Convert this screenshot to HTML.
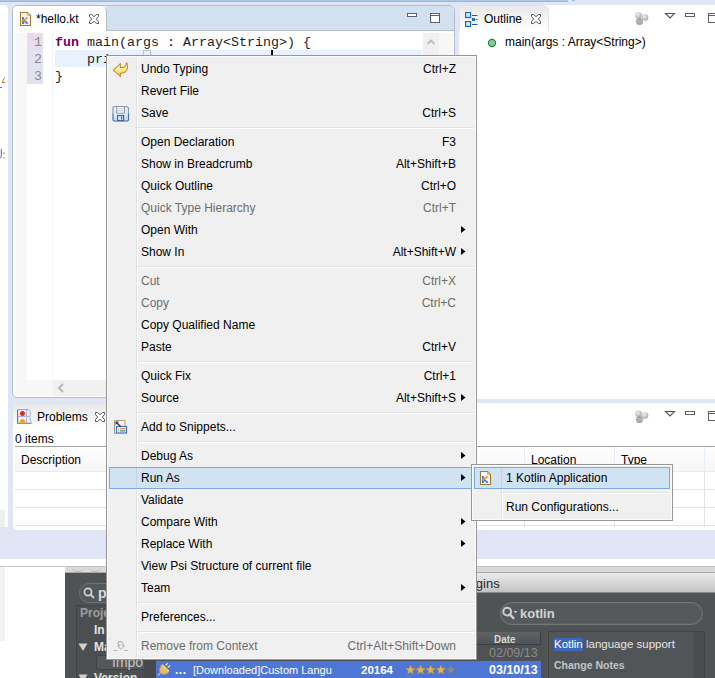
<!DOCTYPE html>
<html><head><meta charset="utf-8">
<style>
*{margin:0;padding:0;box-sizing:border-box}
html,body{width:715px;height:678px;overflow:hidden}
body{position:relative;background:#e1e6f6;font-family:"Liberation Sans",sans-serif;font-size:12px;color:#000}
.a{position:absolute}
.mono{font-family:"Liberation Mono",monospace;font-size:13.33px;line-height:17px;white-space:pre}
.t{white-space:pre;line-height:15px}
.mi{white-space:pre;line-height:22px;font-size:12px}
</style></head><body>

<!-- top strip -->
<div class="a" style="left:0;top:0;width:568px;height:1px;background:#abc8e6"></div>
<div class="a" style="left:0;top:1px;width:568px;height:1px;background:#a9b3c9"></div>

<!-- left trim white -->
<div class="a" style="left:0;top:5px;width:8px;height:522px;background:#fff;border-top-right-radius:5px"></div>
<div class="a" style="left:0;top:510px;width:5px;height:17px;background:#f0f0f0"></div>
<svg class="a" style="left:0;top:76px" width="8" height="14" viewBox="0 0 8 14"><path d="M4.5 1.5L2 6.5h3" fill="none" stroke="#c08030" stroke-width="1"/><path d="M0 11.5h2" stroke="#a07030" stroke-width="1"/></svg>
<svg class="a" style="left:0;top:147px" width="8" height="14" viewBox="0 0 8 14"><path d="M1.3 2v7.5Q1.2 11.2 -1 11.2" fill="none" stroke="#6a6090" stroke-width="1"/><path d="M4 5.4v1.3M4 10.2v1.1" stroke="#5a6070" stroke-width="1.1"/></svg>
<div class="a" style="left:572px;top:0;width:3px;height:1px;background:#9db8d8"></div>

<!-- ============ EDITOR ============ -->
<div class="a" style="left:12px;top:5px;width:443px;height:393px;background:#fff;border:1px solid #b6bccc;border-radius:6px 6px 5px 5px"></div>
<!-- tab bar -->
<div class="a" style="left:106px;top:6px;width:348px;height:25px;background:#d2e1f0;border-bottom:1px solid #b6bccc;border-top-right-radius:5px"></div>
<!-- selected tab -->
<div class="a" style="left:13px;top:6px;width:94px;height:25px;background:#fff;border-right:1px solid #b6bccc;border-radius:5px 6px 0 0"></div>
<div class="a" style="left:106px;top:30px;width:1px;height:1px;background:#b6bccc"></div>
<!-- kotlin file icon -->
<svg class="a" style="left:16px;top:9px" width="20" height="20" viewBox="0 0 20 20">
 <path d="M4.5 3.5H11.5L14.5 6.5V16.5H4.5Z" fill="#f7f8fc" stroke="#a27b2c" stroke-width="1.1"/>
 <path d="M11.5 3.8V6.5H14.2" fill="#efd48a" stroke="#c6a458" stroke-width=".7"/>
 <rect x="6" y="8" width="1.8" height="7" fill="#2f6fd6"/>
 <path d="M7.6 11.2L11.8 14.8" stroke="#4088e4" stroke-width="1.9"/>
 <path d="M6.2 12L11.8 8.4" stroke="#f29a1a" stroke-width="1.8"/>
</svg>
<div class="a t" style="left:36px;top:12px">*hello.kt</div>
<!-- close X -->
<svg class="a" style="left:89px;top:14px" width="10" height="10" viewBox="0 0 10 10"><path d="M0.5 0.5H2.5L5 2.7 7.5 0.5H9.5V2.5L7.3 5 9.5 7.5V9.5H7.5L5 7.3 2.5 9.5H0.5V7.5L2.7 5 0.5 2.5Z" fill="#fff" stroke="#5a5a5a" stroke-width="1"/></svg>
<!-- editor min/max icons -->
<div class="a" style="left:407px;top:13px;width:10px;height:4px;border:1px solid #606060;background:#fff"></div>
<div class="a" style="left:430px;top:13px;width:10px;height:10px;border:1px solid #606060;background:#fff"></div><div class="a" style="left:431px;top:15px;width:8px;height:1px;background:#606060"></div>

<!-- rulers -->
<div class="a" style="left:15px;top:33px;width:12px;height:347px;background:#f7f7f7"></div>
<div class="a" style="left:27px;top:33px;width:16px;height:17px;background:#e9dcec"></div>
<div class="a" style="left:27px;top:50px;width:16px;height:34px;background:#e3e2f0"></div>
<div class="a" style="left:52px;top:33px;width:1px;height:347px;background:#f3f3f3"></div>
<div class="a" style="left:15px;top:380px;width:38px;height:16px;background:#f7f7f7"></div>
<div class="a" style="left:53px;top:380px;width:370px;height:16px;background:#f0f0f0"></div>
<svg class="a" style="left:57px;top:383px" width="8" height="10" viewBox="0 0 8 10"><path d="M6 1L2 5l4 4" fill="none" stroke="#b8b8b8" stroke-width="2"/></svg>
<div class="a mono" style="left:27px;top:34px;width:15px;text-align:right;color:#8a8a8a">1
2
3</div>
<!-- current line -->
<div class="a" style="left:55px;top:50px;width:367px;height:17px;background:#e8f2fe"></div>
<!-- vertical scrollbar -->
<div class="a" style="left:423px;top:33px;width:16px;height:347px;background:#f0f0f0"></div>
<div class="a" style="left:439px;top:33px;width:14px;height:347px;background:#f7f7f7"></div>
<svg class="a" style="left:426px;top:38px" width="10" height="8" viewBox="0 0 10 8"><path d="M1.5 6l3.5-3.5 3.5 3.5" fill="none" stroke="#bdbdbd" stroke-width="1.8"/></svg>
<div class="a mono" style="left:55px;top:34px;color:#1e1e1e"><b style="color:#7f0055">fun</b> main(args : Array&lt;String&gt;) {
    pri
}</div>
<div class="a" style="left:143px;top:50px;width:8px;height:6px;border:1px solid #c0c0c0;border-bottom:none"></div>
<div class="a" style="left:271px;top:50px;width:2px;height:6px;background:#000"></div>

<!-- ============ OUTLINE ============ -->
<div class="a" style="left:459px;top:5px;width:260px;height:394px;background:#fff;border-top-left-radius:6px"></div>
<div class="a" style="left:459px;top:5px;width:90px;height:26px;background:linear-gradient(#e9e9ea,#fff);border:1px solid #e3e3e3;border-bottom:none;border-radius:6px 6px 0 0"></div>
<!-- outline icon -->
<svg class="a" style="left:465px;top:12px" width="14" height="15" viewBox="0 0 14 15">
 <defs><linearGradient id="og" x1="0" y1="0" x2="0" y2="1"><stop offset="0" stop-color="#ffffff"/><stop offset="1" stop-color="#9ed6f6"/></linearGradient></defs>
 <rect x="0.6" y="0.6" width="5" height="5" fill="url(#og)" stroke="#1f6ab6" stroke-width="1.2"/>
 <rect x="0.6" y="9.6" width="5" height="5" fill="url(#og)" stroke="#1f6ab6" stroke-width="1.2"/>
 <rect x="7.5" y="6.5" width="2" height="2" fill="#fff" stroke="#1f6ab6" stroke-width="1.1"/>
 <path d="M7 3.5h5.5M10.8 7.5h1.7M7 12.5h5.5" stroke="#2a58a8" stroke-width="1.1"/>
</svg>
<div class="a t" style="left:484px;top:12px">Outline</div>
<svg class="a" style="left:531px;top:14px" width="10" height="10" viewBox="0 0 10 10"><path d="M0.5 0.5H2.5L5 2.7 7.5 0.5H9.5V2.5L7.3 5 9.5 7.5V9.5H7.5L5 7.3 2.5 9.5H0.5V7.5L2.7 5 0.5 2.5Z" fill="#fff" stroke="#5a5a5a" stroke-width="1"/></svg>
<!-- balls -->
<svg class="a" style="left:634px;top:11px" width="16" height="16" viewBox="0 0 16 16">
 <defs><radialGradient id="bg11" cx=".4" cy=".35" r=".7"><stop offset="0" stop-color="#f0f0f0"/><stop offset="1" stop-color="#a8a8a8"/></radialGradient></defs>
 <circle cx="4.5" cy="4.5" r="3.3" fill="url(#bg11)"/><circle cx="11" cy="6.5" r="3.3" fill="url(#bg11)"/><circle cx="5.5" cy="10.5" r="3.6" fill="#a0a0a0"/>
 <path d="M2.2 9.6h6.6M2 11.6h7" stroke="#c8c8c8" stroke-width=".8"/>
</svg>
<svg class="a" style="left:664px;top:12px" width="12" height="8" viewBox="0 0 12 8"><path d="M1.5 1.5h9L6 6z" fill="#fff" stroke="#555" stroke-width="1.1"/></svg>
<div class="a" style="left:685px;top:13px;width:10px;height:4px;border:1px solid #606060"></div>
<div class="a" style="left:708px;top:13px;width:10px;height:10px;border:1px solid #606060"></div><div class="a" style="left:709px;top:15px;width:8px;height:1px;background:#606060"></div>
<svg class="a" style="left:487px;top:38px" width="10" height="10" viewBox="0 0 10 10"><circle cx="5" cy="5" r="3.6" fill="#92c88e" stroke="#138a48" stroke-width="1.1"/></svg>
<div class="a t" style="left:505px;top:35px">main(args : Array&lt;String&gt;)</div>

<!-- ============ PROBLEMS ============ -->
<div class="a" style="left:12px;top:403px;width:710px;height:127px;background:#fff;border-left:1px solid #e6e6e6;border-radius:6px 0 0 6px"></div>
<div class="a" style="left:12px;top:403px;width:104px;height:26px;background:linear-gradient(#e9e9ea,#fff);border:1px solid #e3e3e3;border-bottom:none;border-radius:6px 6px 0 0"></div>
<svg class="a" style="left:17px;top:409px" width="16" height="16" viewBox="0 0 16 16">
 <path d="M0.5 0.5H11.2C13 1.2 13.6 3 13.2 5.5 12.8 8 12.6 11 14.5 14.3H0.5Z" fill="#eef6fc"/>
 <path d="M9.5 1V14M1 7.5H12.6" stroke="#a9b9e6" stroke-width="1"/>
 <path d="M0.6 0.5V14.3H14.5" fill="none" stroke="#65728a" stroke-width="1.1"/>
 <path d="M0.6 0.6H11.2" stroke="#b9a07a" stroke-width="1"/>
 <path d="M11.2 0.6C13 1.2 13.6 3 13.2 5.5 12.8 8 12.6 11 14.5 14.3" fill="none" stroke="#9aa8c0" stroke-width=".9"/>
 <circle cx="5.4" cy="4.4" r="2.5" fill="#e02828"/>
 <path d="M2.8 13.8V11.4Q5.4 8.4 8 11.4V13.8Z" fill="#f5a818"/>
</svg>
<div class="a t" style="left:37px;top:410px">Problems</div>
<svg class="a" style="left:95px;top:412px" width="10" height="10" viewBox="0 0 10 10"><path d="M0.5 0.5H2.5L5 2.7 7.5 0.5H9.5V2.5L7.3 5 9.5 7.5V9.5H7.5L5 7.3 2.5 9.5H0.5V7.5L2.7 5 0.5 2.5Z" fill="#fff" stroke="#5a5a5a" stroke-width="1"/></svg>
<svg class="a" style="left:634px;top:409px" width="16" height="16" viewBox="0 0 16 16">
 <defs><radialGradient id="bg409" cx=".4" cy=".35" r=".7"><stop offset="0" stop-color="#f0f0f0"/><stop offset="1" stop-color="#a8a8a8"/></radialGradient></defs>
 <circle cx="4.5" cy="4.5" r="3.3" fill="url(#bg409)"/><circle cx="11" cy="6.5" r="3.3" fill="url(#bg409)"/><circle cx="5.5" cy="10.5" r="3.6" fill="#a0a0a0"/>
 <path d="M2.2 9.6h6.6M2 11.6h7" stroke="#c8c8c8" stroke-width=".8"/>
</svg>
<svg class="a" style="left:664px;top:410px" width="12" height="8" viewBox="0 0 12 8"><path d="M1.5 1.5h9L6 6z" fill="#fff" stroke="#555" stroke-width="1.1"/></svg>
<div class="a" style="left:685px;top:411px;width:10px;height:4px;border:1px solid #606060"></div>
<div class="a" style="left:708px;top:411px;width:10px;height:10px;border:1px solid #606060"></div><div class="a" style="left:709px;top:413px;width:8px;height:1px;background:#606060"></div>
<div class="a t" style="left:15px;top:432px">0 items</div>
<div class="a" style="left:15px;top:446px;width:700px;height:1px;background:#a0a0a0"></div>
<div class="a" style="left:15px;top:447px;width:700px;height:24px;background:linear-gradient(#fff,#f6f6f6)"></div>
<div class="a" style="left:15px;top:471px;width:700px;height:1px;background:#e4ecf7"></div>
<div class="a" style="left:15px;top:489px;width:700px;height:1px;background:#e4e4e4"></div>
<div class="a" style="left:15px;top:507px;width:700px;height:1px;background:#e4e4e4"></div>
<div class="a" style="left:15px;top:525px;width:700px;height:1px;background:#e4e4e4"></div>
<div class="a" style="left:524px;top:447px;width:1px;height:24px;background:#e6eefa"></div><div class="a" style="left:524px;top:472px;width:1px;height:55px;background:#e2e2e2"></div>
<div class="a" style="left:614px;top:447px;width:1px;height:24px;background:#e6eefa"></div><div class="a" style="left:614px;top:472px;width:1px;height:55px;background:#e2e2e2"></div>
<div class="a" style="left:704px;top:447px;width:1px;height:24px;background:#e6eefa"></div><div class="a" style="left:704px;top:472px;width:1px;height:55px;background:#e2e2e2"></div>
<div class="a t" style="left:21px;top:453px">Description</div>
<div class="a t" style="left:531px;top:453px">Location</div>
<div class="a t" style="left:621px;top:453px">Type</div>

<!-- ============ BOTTOM ============ -->
<div class="a" style="left:0;top:559px;width:715px;height:119px;background:#fff"></div>
<div class="a" style="left:0;top:566px;width:715px;height:1px;background:#c4c4c4"></div>
<div class="a" style="left:0;top:567px;width:5px;height:74px;background:#f2f2f2"></div>

<!-- MAC WINDOW -->
<div class="a" style="left:65px;top:567px;width:650px;height:111px;background:#505354"></div>
<div class="a" style="left:65px;top:567px;width:650px;height:5px;background:#d9d9d9"></div>
<div class="a" style="left:72px;top:561px;width:12px;height:11px;border-radius:50%;border-bottom:1px solid #bdbdbd"></div>
<div class="a" style="left:89px;top:561px;width:12px;height:11px;border-radius:50%;border-bottom:1px solid #bdbdbd"></div>
<div class="a" style="left:65px;top:572px;width:650px;height:1px;background:#a8a8a8"></div>
<!-- left search -->
<div class="a" style="left:79px;top:583px;width:120px;height:20px;border-radius:10px;background:#55585a;border:1px solid #6e7173"></div>
<svg class="a" style="left:83px;top:587px" width="13" height="12" viewBox="0 0 13 12"><circle cx="5" cy="5" r="3.6" fill="none" stroke="#d0d0d0" stroke-width="1.7"/><path d="M7.5 7.5l3.5 3.5" stroke="#d0d0d0" stroke-width="2"/></svg>
<div class="a" style="left:98px;top:584px;font-size:14px;line-height:18px;color:#dadada;font-weight:bold">pl</div>
<!-- tree -->
<div class="a" style="left:76px;top:605px;width:80px;height:73px;background:#4c4f51;border-left:1px solid #414446;border-top:1px solid #414446"></div>
<div class="a" style="left:80px;top:606px;font-size:12px;line-height:14px;color:#9d9d9d;font-weight:bold">Proje</div>
<div class="a" style="left:94px;top:623px;font-size:12px;line-height:14px;color:#e2e2e2;font-weight:bold">In</div>
<svg class="a" style="left:78px;top:643px" width="10" height="8" viewBox="0 0 10 8"><path d="M0.5 0.5h9L5 8z" fill="#d0d0d0"/></svg>
<div class="a" style="left:94px;top:640px;font-size:12px;line-height:14px;color:#e2e2e2;font-weight:bold">Ma</div>
<div class="a" style="left:96px;top:655px;width:55px;height:15px;background:#55585a;border:1px solid #3e4143;border-radius:3px"></div>
<div class="a" style="left:112px;top:654px;font-size:14px;line-height:17px;color:#c4c4c4">Impo</div>
<svg class="a" style="left:78px;top:674px" width="10" height="8" viewBox="0 0 10 8"><path d="M0.5 0.5h9L5 8z" fill="#d0d0d0"/></svg>
<div class="a" style="left:94px;top:671px;font-size:12px;line-height:14px;color:#e2e2e2;font-weight:bold">Version</div>
<div class="a" style="left:144px;top:605px;width:12px;height:73px;background:#474a4c"></div>
<!-- right panel header -->
<div class="a" style="left:150px;top:573px;width:565px;height:19px;background:linear-gradient(#ebebeb,#c2c2c2)"></div>
<div class="a" style="left:150px;top:592px;width:565px;height:1px;background:#8a8a8a"></div>
<div class="a" style="left:457px;top:575px;font-size:13px;line-height:17px;color:#2a2a2a">Plugins</div>
<!-- kotlin search -->
<div class="a" style="left:500px;top:602px;width:203px;height:23px;border-radius:12px;background:#56595b;border:1px solid #74777a;box-shadow:inset 0 0 0 .6px #65686a"></div>
<svg class="a" style="left:500px;top:605px" width="20" height="16" viewBox="0 0 20 16"><circle cx="7.2" cy="6.6" r="3.9" fill="none" stroke="#cdcdcd" stroke-width="2"/><path d="M9.8 9.3l3.6 3.8" stroke="#cdcdcd" stroke-width="2.4" stroke-linecap="round"/><path d="M13.6 6h3.8l-1.9 2.2z" fill="#cdcdcd"/></svg>
<div class="a" style="left:520px;top:605px;font-size:13px;line-height:17px;color:#d2d2d2;font-weight:bold">kotlin</div>
<!-- table -->
<div class="a" style="left:156px;top:632px;width:385px;height:13px;background:linear-gradient(#606365,#505355);border-bottom:1px solid #3c3f41"></div>
<div class="a" style="left:540px;top:632px;width:1px;height:13px;background:#3c3f41"></div>
<div class="a" style="left:494px;top:633px;font-size:10px;line-height:13px;color:#d6d6d6;font-weight:bold">Date</div>
<div class="a" style="left:156px;top:645px;width:385px;height:16px;background:#4f5254"></div>
<div class="a" style="left:489px;top:646px;font-size:12.5px;line-height:15px;color:#8c8c8c">02/09/13</div>
<div class="a" style="left:156px;top:661px;width:385px;height:17px;background:#4e76d5"></div>
<svg class="a" style="left:150px;top:658px" width="24" height="20" viewBox="0 0 24 20"><path d="M10.8 14.6L7.6 17.8" stroke="#b8b8b8" stroke-width="1.4"/><path d="M12 6.2L19.2 13.4Q15.5 17.8 11.2 15.6Q7.8 12 12 6.2Z" fill="#e8bc64" stroke="#c99a3c" stroke-width=".7"/><path d="M12.4 6.8L18.6 13" stroke="#f6dc96" stroke-width="1.2"/><path d="M15.6 7.2L17.9 5.3M17.8 9.4L20.1 7.5" stroke="#e2e2e2" stroke-width="1.3"/></svg>
<div class="a" style="left:175px;top:663px;font-size:12px;line-height:14px;color:#fff;font-weight:bold;letter-spacing:.5px">...</div>
<div class="a" style="left:193px;top:664px;font-size:11px;line-height:13px;color:#fff">[Downloaded]Custom Langu</div>
<div class="a" style="left:361px;top:663px;font-size:11.5px;line-height:15px;color:#fff;font-weight:bold">20164</div>
<svg class="a" style="left:400px;top:660px" width="60" height="18" viewBox="0 0 60 18"><polygon points="10.50,5.00 11.79,8.22 15.26,8.45 12.59,10.68 13.44,14.05 10.50,12.20 7.56,14.05 8.41,10.68 5.74,8.45 9.21,8.22" fill="#e3b352" stroke="#b88a3a" stroke-width=".4"/><polygon points="20.60,5.00 21.89,8.22 25.36,8.45 22.69,10.68 23.54,14.05 20.60,12.20 17.66,14.05 18.51,10.68 15.84,8.45 19.31,8.22" fill="#e3b352" stroke="#b88a3a" stroke-width=".4"/><polygon points="30.70,5.00 31.99,8.22 35.46,8.45 32.79,10.68 33.64,14.05 30.70,12.20 27.76,14.05 28.61,10.68 25.94,8.45 29.41,8.22" fill="#e3b352" stroke="#b88a3a" stroke-width=".4"/><polygon points="40.80,5.00 42.09,8.22 45.56,8.45 42.89,10.68 43.74,14.05 40.80,12.20 37.86,14.05 38.71,10.68 36.04,8.45 39.51,8.22" fill="#e3b352" stroke="#b88a3a" stroke-width=".4"/><polygon points="50.80,5.00 52.09,8.22 55.56,8.45 52.89,10.68 53.74,14.05 50.80,12.20 47.86,14.05 48.71,10.68 46.04,8.45 49.51,8.22" fill="#8a8c90" stroke="#707276" stroke-width=".4"/></svg>
<div class="a" style="left:489px;top:663px;font-size:12.5px;line-height:15px;color:#fff;font-weight:bold">03/10/13</div>
<!-- detail -->
<div class="a" style="left:548px;top:631px;width:157px;height:47px;background:#525557;border:1px solid #404345;border-bottom:none"></div>
<div class="a" style="left:693px;top:632px;width:11px;height:46px;background:#4a4d4f"></div>
<div class="a" style="left:554px;top:638px;width:29px;height:13px;background:#3d66bb"></div>
<div class="a" style="left:554px;top:637px;font-size:11.5px;line-height:14px;color:#e6e6e6;white-space:pre"><span style="color:#fff">Kotlin</span> language support</div>
<div class="a" style="left:554px;top:659px;font-size:10.5px;line-height:13px;color:#c4c4c4;font-weight:bold;white-space:pre">Change Notes</div>



























<!--MENU-->
<div class="a" style="left:106px;top:55px;width:371px;height:605px;background:#f0f0f0;border:1px solid #979797;box-shadow:inset 0 0 0 1px #fafafa"></div>
<div class="a" style="left:136px;top:57px;width:1px;height:600px;background:#e2e3e3"></div>
<div class="a" style="left:137px;top:57px;width:1px;height:600px;background:#fff"></div>
<div class="a mi" style="left:141px;top:58px">Undo Typing</div>
<div class="a mi" style="right:259px;top:58px;text-align:right">Ctrl+Z</div>
<svg class="a" style="left:108px;top:58px" width="26" height="24" viewBox="0 0 26 24">
 <defs><linearGradient id="ug" x1="0" y1="0" x2="0" y2="1"><stop offset="0" stop-color="#fffbd8"/><stop offset=".5" stop-color="#fde9a0"/><stop offset="1" stop-color="#f5b860"/></linearGradient></defs>
 <path d="M5.3 12.2L12.4 5.6V9.4H15.6C17 9.2 18 7 18.6 4.6C19.6 5.6 19.8 7.5 19.6 9.5C19.2 12.5 16.8 15 13 15.3H12.4V18.4Z" fill="url(#ug)" stroke="#c8902c" stroke-width="1.1" stroke-linejoin="round"/>
</svg>
<div class="a mi" style="left:141px;top:80px">Revert File</div>
<div class="a mi" style="left:141px;top:102px">Save</div>
<div class="a mi" style="right:259px;top:102px;text-align:right">Ctrl+S</div>
<svg class="a" style="left:108px;top:102px" width="26" height="24" viewBox="0 0 26 24">
 <defs><linearGradient id="sg" x1="0" y1="0" x2="0" y2="1"><stop offset="0" stop-color="#f4f6fc"/><stop offset="1" stop-color="#c8d8f0"/></linearGradient>
 <linearGradient id="sb" x1="0" y1="0" x2="0" y2="1"><stop offset="0" stop-color="#8d9cb4"/><stop offset=".45" stop-color="#8d9cb4"/><stop offset=".55" stop-color="#4d6db4"/><stop offset="1" stop-color="#4d6db4"/></linearGradient></defs>
 <path d="M6 4.5H19L20.5 6V18L19.5 19H6L5 18V5.5Z" fill="url(#sg)" stroke="url(#sb)" stroke-width="1.2"/>
 <rect x="8.8" y="4.5" width="7.6" height="6.8" rx=".6" fill="#fbfbfd" stroke="#8d98a8" stroke-width="1.1"/>
 <path d="M10 6.8h5.2M10 8.8h5.2" stroke="#c4c4c4" stroke-width=".9"/>
 <rect x="9.6" y="13.6" width="6" height="5" fill="#dce8f8" stroke="#3f5ea8" stroke-width="1.1"/>
 <path d="M13.6 14.6v3" stroke="#3f5ea8" stroke-width="1.2"/>
</svg>
<div class="a" style="left:137px;top:127px;width:337px;height:1px;background:#e2e3e3"></div>
<div class="a" style="left:137px;top:128px;width:337px;height:1px;background:#fff"></div>
<div class="a mi" style="left:141px;top:131px">Open Declaration</div>
<div class="a mi" style="right:259px;top:131px;text-align:right">F3</div>
<div class="a mi" style="left:141px;top:153px">Show in Breadcrumb</div>
<div class="a mi" style="right:259px;top:153px;text-align:right">Alt+Shift+B</div>
<div class="a mi" style="left:141px;top:175px">Quick Outline</div>
<div class="a mi" style="right:259px;top:175px;text-align:right">Ctrl+O</div>
<div class="a mi" style="left:141px;top:197px;color:#6d6d6d">Quick Type Hierarchy</div>
<div class="a mi" style="right:259px;top:197px;text-align:right;color:#6d6d6d">Ctrl+T</div>
<div class="a mi" style="left:141px;top:219px">Open With</div>
<svg class="a" style="left:461px;top:226px" width="5" height="8" viewBox="0 0 5 8"><path d="M0 0L4.5 3.5 0 7z" fill="#000"/></svg>
<div class="a mi" style="left:141px;top:241px">Show In</div>
<div class="a mi" style="right:259px;top:241px;text-align:right">Alt+Shift+W</div>
<svg class="a" style="left:461px;top:248px" width="5" height="8" viewBox="0 0 5 8"><path d="M0 0L4.5 3.5 0 7z" fill="#000"/></svg>
<div class="a" style="left:137px;top:266px;width:337px;height:1px;background:#e2e3e3"></div>
<div class="a" style="left:137px;top:267px;width:337px;height:1px;background:#fff"></div>
<div class="a mi" style="left:141px;top:270px;color:#6d6d6d">Cut</div>
<div class="a mi" style="right:259px;top:270px;text-align:right;color:#6d6d6d">Ctrl+X</div>
<div class="a mi" style="left:141px;top:292px;color:#6d6d6d">Copy</div>
<div class="a mi" style="right:259px;top:292px;text-align:right;color:#6d6d6d">Ctrl+C</div>
<div class="a mi" style="left:141px;top:314px">Copy Qualified Name</div>
<div class="a mi" style="left:141px;top:336px">Paste</div>
<div class="a mi" style="right:259px;top:336px;text-align:right">Ctrl+V</div>
<div class="a" style="left:137px;top:361px;width:337px;height:1px;background:#e2e3e3"></div>
<div class="a" style="left:137px;top:362px;width:337px;height:1px;background:#fff"></div>
<div class="a mi" style="left:141px;top:365px">Quick Fix</div>
<div class="a mi" style="right:259px;top:365px;text-align:right">Ctrl+1</div>
<div class="a mi" style="left:141px;top:387px">Source</div>
<div class="a mi" style="right:259px;top:387px;text-align:right">Alt+Shift+S</div>
<svg class="a" style="left:461px;top:394px" width="5" height="8" viewBox="0 0 5 8"><path d="M0 0L4.5 3.5 0 7z" fill="#000"/></svg>
<div class="a" style="left:137px;top:412px;width:337px;height:1px;background:#e2e3e3"></div>
<div class="a" style="left:137px;top:413px;width:337px;height:1px;background:#fff"></div>
<div class="a mi" style="left:141px;top:416px">Add to Snippets...</div>
<svg class="a" style="left:114px;top:420px" width="15" height="15" viewBox="0 0 15 15">
 <path d="M0.5 13.5V0.5H11V6" fill="#f6f6f8" stroke="#b5a27a"/>
 <path d="M0.5 4V13.5H2" fill="none" stroke="#9a9a9a"/>
 <rect x="2.5" y="6.5" width="10" height="6.5" fill="#fff" stroke="#4570b8" stroke-width="1.2"/>
 <path d="M2.2 2.2L6.8 6.8" stroke="#1d3566" stroke-width="1.3"/><path d="M1.5 1.5H5L1.5 5Z" fill="#1d3566"/>
 <path d="M4.2 8.7h1M6 8.7h5.5" stroke="#e05858" stroke-width="1.1"/><path d="M4.2 10.9h1M6 10.9h5.5" stroke="#3aa050" stroke-width="1.1"/>
</svg>
<div class="a" style="left:137px;top:441px;width:337px;height:1px;background:#e2e3e3"></div>
<div class="a" style="left:137px;top:442px;width:337px;height:1px;background:#fff"></div>
<div class="a mi" style="left:141px;top:445px">Debug As</div>
<svg class="a" style="left:461px;top:452px" width="5" height="8" viewBox="0 0 5 8"><path d="M0 0L4.5 3.5 0 7z" fill="#000"/></svg>
<div class="a" style="left:109px;top:467px;width:365px;height:22px;background:#d1e2f2;border:1px solid #7aa9e3"></div>
<div class="a" style="left:136px;top:468px;width:1px;height:20px;background:#c5d3e0"></div>
<div class="a mi" style="left:141px;top:467px">Run As</div>
<svg class="a" style="left:461px;top:474px" width="5" height="8" viewBox="0 0 5 8"><path d="M0 0L4.5 3.5 0 7z" fill="#000"/></svg>
<div class="a mi" style="left:141px;top:489px">Validate</div>
<div class="a mi" style="left:141px;top:511px">Compare With</div>
<svg class="a" style="left:461px;top:518px" width="5" height="8" viewBox="0 0 5 8"><path d="M0 0L4.5 3.5 0 7z" fill="#000"/></svg>
<div class="a mi" style="left:141px;top:533px">Replace With</div>
<svg class="a" style="left:461px;top:540px" width="5" height="8" viewBox="0 0 5 8"><path d="M0 0L4.5 3.5 0 7z" fill="#000"/></svg>
<div class="a mi" style="left:141px;top:555px">View Psi Structure of current file</div>
<div class="a mi" style="left:141px;top:577px">Team</div>
<svg class="a" style="left:461px;top:584px" width="5" height="8" viewBox="0 0 5 8"><path d="M0 0L4.5 3.5 0 7z" fill="#000"/></svg>
<div class="a" style="left:137px;top:602px;width:337px;height:1px;background:#e2e3e3"></div>
<div class="a" style="left:137px;top:603px;width:337px;height:1px;background:#fff"></div>
<div class="a mi" style="left:141px;top:606px">Preferences...</div>
<div class="a" style="left:137px;top:631px;width:337px;height:1px;background:#e2e3e3"></div>
<div class="a" style="left:137px;top:632px;width:337px;height:1px;background:#fff"></div>
<div class="a mi" style="left:141px;top:635px;color:#6d6d6d">Remove from Context</div>
<div class="a mi" style="right:259px;top:635px;text-align:right;color:#6d6d6d">Ctrl+Alt+Shift+Down</div>
<svg class="a" style="left:114px;top:640px" width="14" height="12" viewBox="0 0 14 12">
 <path d="M4.5 1.5h3l1.5 2v2.5h1.5l-3.5 3.5-3.5-3.5h2l-1.5-2z" fill="#e8e8e8" stroke="#a8a8a8" stroke-width=".9"/>
 <path d="M0 10.5h3.5M10 10.5h4" stroke="#b8b8b8"/>
</svg>
<!--SUBMENU-->
<div class="a" style="left:471px;top:464px;width:202px;height:57px;background:#f0f0f0;border:1px solid #979797;box-shadow:inset 0 0 0 1px #fafafa"></div>
<div class="a" style="left:501px;top:466px;width:1px;height:53px;background:#e2e3e3"></div>
<div class="a" style="left:502px;top:466px;width:1px;height:53px;background:#fff"></div>
<div class="a" style="left:474px;top:467px;width:196px;height:22px;background:#d1e2f2;border:1px solid #7aa9e3"></div>
<div class="a" style="left:501px;top:468px;width:1px;height:20px;background:#c5d3e0"></div>
<svg class="a" style="left:476px;top:468px" width="20" height="20" viewBox="0 0 20 20">
 <path d="M4.5 3.5H11.5L14.5 6.5V16.5H4.5Z" fill="#f7f8fc" stroke="#a27b2c" stroke-width="1.1"/>
 <path d="M11.5 3.8V6.5H14.2" fill="#efd48a" stroke="#c6a458" stroke-width=".7"/>
 <rect x="6" y="8" width="1.8" height="7" fill="#2f6fd6"/>
 <path d="M7.6 11.2L11.8 14.8" stroke="#4088e4" stroke-width="1.9"/>
 <path d="M6.2 12L11.8 8.4" stroke="#f29a1a" stroke-width="1.8"/>
</svg>
<div class="a mi" style="left:506px;top:467px">1 Kotlin Application</div>
<div class="a" style="left:502px;top:492px;width:168px;height:1px;background:#e2e3e3"></div>
<div class="a" style="left:502px;top:493px;width:168px;height:1px;background:#fff"></div>
<div class="a mi" style="left:506px;top:496px">Run Configurations...</div>
<!--ENDMENU-->
</body></html>
